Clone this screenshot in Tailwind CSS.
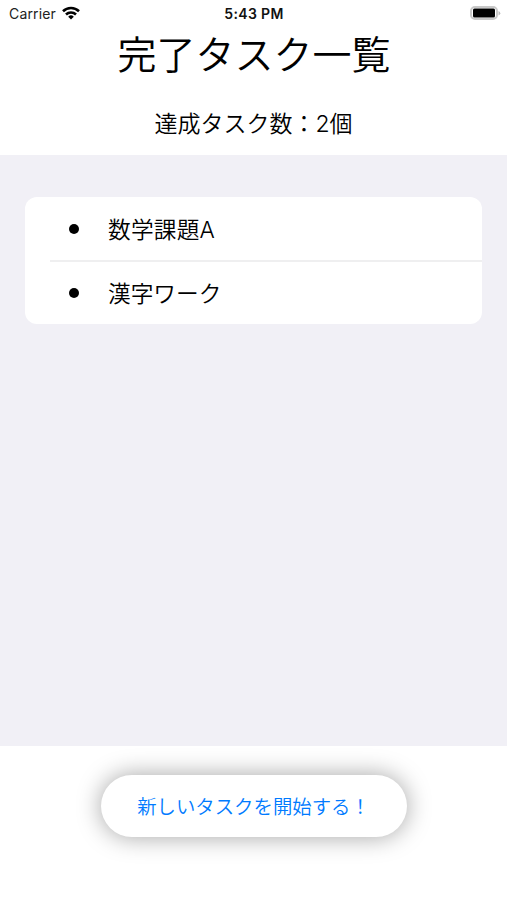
<!DOCTYPE html>
<html lang="ja">
    <head>
        <meta charset="UTF-8">
        <meta name="viewport" content="width=device-width, initial-scale=1.0">
        <title>完了タスク一覧</title>
        <script src="https://cdn.jsdelivr.net/npm/@tailwindcss/browser@4"></script>
    </head>
    <body class="flex h-[900px] flex-col overflow-hidden bg-white font-['Inter','Noto_Sans_CJK_JP',sans-serif] text-black">
        <!-- Status bar -->
        <div class="grid h-[27px] shrink-0 grid-cols-3 items-center pr-[6px] pl-[9px] text-[14px]">
            <div class="flex items-center gap-[6px] text-[#222]">
                <span class="tracking-[0.15px]">Carrier</span>
                <svg class="-mt-[2px] h-[14px] w-[18px] text-black" viewBox="0 0 18 14" fill="none" stroke="currentColor" stroke-width="2.6">
                    <path d="M1 5.2a11.5 11.5 0 0 1 16 0"/>
                    <path d="M4 8.5a7.2 7.2 0 0 1 10 0"/>
                    <path d="M9 13.5 6.2 10.7a4 4 0 0 1 5.6 0z" fill="currentColor" stroke="none"/>
                </svg>
            </div>
            <span class="-ml-[2px] text-center font-semibold tracking-[0.35px] text-[#111]">5:43 PM</span>
            <svg class="-mt-[1px] h-[14px] w-[31px] justify-self-end" viewBox="0 0 31 14">
                <rect x="1" y="1" width="26" height="12" rx="4" fill="none" stroke="#c8c8c8" stroke-width="2"/>
                <rect x="3" y="2.5" width="22" height="9" rx="1.5"/>
                <path d="M28.500 5v4.500q1.800-.7 1.800-2.200T28.500 5" fill="#bbb"/>
            </svg>
        </div>

        <!-- Title -->
        <div class="flex h-[128px] shrink-0 flex-col items-center">
            <h1 class="mt-[2px] pl-[1px] text-[39px] leading-[52px] font-[350]">完了タスク一覧</h1>
            <p class="mt-[26px] text-[23px] leading-[34px] font-[350]">達成タスク数：2個</p>
        </div>

        <!-- Finished tasks -->
        <div class="h-[591px] shrink-0 bg-[#f1f0f6] px-[25px] pt-[42px]">
            <ul class="overflow-hidden rounded-[12px] bg-white pl-[25px] text-[22.700px] font-[350]">
                <li class="flex h-[65px] items-center border-b-2 border-[#efeff0] pl-[19px]">
                    <span class="mr-[29px] size-[10px] rounded-full bg-black"></span>
                    <span class="pt-[4px] tracking-[0.2px]">数学課題A</span>
                </li>
                <li class="flex h-[62px] items-center pl-[19px]">
                    <span class="mr-[29px] size-[10px] rounded-full bg-black"></span>
                    <span class="pt-[2px]">漢字ワーク</span>
                </li>
            </ul>
        </div>

        <!-- Start button -->
        <div class="flex justify-center pt-[29px]">
            <button class="h-[62px] w-[306px] rounded-full bg-white pt-[3px] text-[19.400px] font-[350] text-[#007aff] shadow-[0_0_24px_rgba(0,0,0,0.36)]">新しいタスクを開始する！</button>
        </div>
    </body>
</html>
